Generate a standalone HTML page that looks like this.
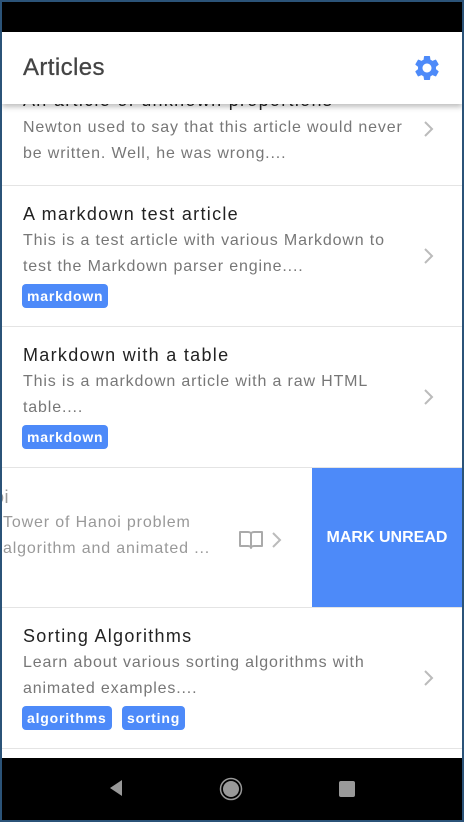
<!DOCTYPE html>
<html><head><meta charset="utf-8"><style>
*{margin:0;padding:0;box-sizing:border-box}
body{width:464px;height:822px;background:#2b5378;position:relative;overflow:hidden;font-family:"Liberation Sans",Roboto,sans-serif}
.screen{position:absolute;left:2px;top:2px;width:460px;height:818px;background:#fff;overflow:hidden}
.status{position:absolute;left:0;top:0;width:460px;height:30px;background:#000}
.appbar{position:absolute;left:0;top:30px;width:460px;height:72px;background:#fff;box-shadow:0 3px 5px rgba(0,0,0,.25);z-index:5}
.appbar h1{position:absolute;left:21px;top:22px;font-size:24px;font-weight:normal;color:#444;letter-spacing:0.4px;-webkit-text-stroke:0.3px #444}
.gear{position:absolute;left:410px;top:21px}
.row{position:absolute;left:0;width:460px;height:141px;border-bottom:1.5px solid #e4e4e4;background:#fff;overflow:hidden}
.t{position:absolute;left:21px;top:18px;font-size:18px;color:#222;white-space:nowrap;letter-spacing:1.3px}
.d{position:absolute;left:21px;font-size:16px;color:#777;white-space:nowrap;letter-spacing:0.85px}
.chev{position:absolute;left:420px;top:59px}
.tag{position:absolute;top:98px;height:24px;padding:0 5px;background:#4d8af9;color:#fff;font-weight:bold;font-size:14px;line-height:24px;border-radius:4px;letter-spacing:0.8px}
.nav{position:absolute;left:0;top:756px;width:460px;height:62px;background:#000}
</style></head><body><div class="screen">
<div class="status"></div>
<div class="appbar"><h1>Articles</h1>
<svg class="gear" width="30" height="30" viewBox="0 0 24 24"><path fill="#4d8af9" d="M19.14 12.94c.04-.3.06-.61.06-.94 0-.32-.02-.64-.07-.94l2.03-1.58a.49.49 0 0 0 .12-.61l-1.92-3.32a.49.49 0 0 0-.59-.22l-2.39.96c-.5-.38-1.03-.7-1.62-.94l-.36-2.54a.48.48 0 0 0-.48-.41h-3.84c-.24 0-.43.17-.47.41l-.36 2.54c-.59.24-1.13.57-1.62.94l-2.39-.96a.48.48 0 0 0-.59.22L2.74 8.87c-.12.21-.08.47.12.61l2.03 1.58c-.05.3-.09.63-.09.94s.02.64.07.94l-2.03 1.58a.49.49 0 0 0-.12.61l1.92 3.32c.12.22.37.29.59.22l2.39-.96c.5.38 1.03.7 1.62.94l.36 2.54c.05.24.24.41.48.41h3.84c.24 0 .44-.17.47-.41l.36-2.54c.59-.24 1.13-.56 1.62-.94l2.39.96c.22.08.47 0 .59-.22l1.92-3.32c.12-.22.07-.47-.12-.61l-2.01-1.58zM12 15.6c-1.98 0-3.6-1.62-3.6-3.6s1.62-3.6 3.6-3.6 3.6 1.62 3.6 3.6-1.62 3.6-3.6 3.6z"/></svg></div>

<div class="row" style="top:70px;height:114px"><div class="t" style="top:18px">An article of unknown proportions</div><div class="d" style="top:47px">Newton used to say that this article would never</div><div class="d" style="top:73px">be written. Well, he was wrong....</div><svg class="chev" style="top:46px" width="14" height="22" viewBox="0 0 14 22"><path d="M3 4l7 7-7 7" fill="none" stroke="#bbb" stroke-width="2"/></svg></div>

<div class="row" style="top:184px"><div class="t">A markdown test article</div><div class="d" style="top:46px">This is a test article with various Markdown to</div><div class="d" style="top:72px">test the Markdown parser engine....</div><svg class="chev" width="14" height="22" viewBox="0 0 14 22"><path d="M3 4l7 7-7 7" fill="none" stroke="#bbb" stroke-width="2"/></svg><div class="tag" style="left:20px">markdown</div></div>

<div class="row" style="top:325px"><div class="t">Markdown with a table</div><div class="d" style="top:46px">This is a markdown article with a raw HTML</div><div class="d" style="top:72px">table....</div><svg class="chev" width="14" height="22" viewBox="0 0 14 22"><path d="M3 4l7 7-7 7" fill="none" stroke="#bbb" stroke-width="2"/></svg><div class="tag" style="left:20px">markdown</div></div>

<div class="row" style="top:466px;height:140px">
<div class="t" style="left:-8px;top:19px;color:#999;letter-spacing:0.5px">oi</div>
<div class="d" style="left:1px;top:46px;color:#999">Tower of Hanoi problem</div>
<div class="d" style="left:1px;top:72px;color:#999">algorithm and animated ...</div>
<svg style="position:absolute;left:236px;top:62px" width="26" height="20" viewBox="0 0 26 20"><path d="M2 2h8c2 0 3 1 3 2v14c0-1-1-2-3-2H2zM24 2h-8c-2 0-3 1-3 2v14c0-1 1-2 3-2h8z" fill="none" stroke="#aaa" stroke-width="2" stroke-linejoin="round"/></svg>
<svg style="position:absolute;left:268px;top:61px" width="14" height="22" viewBox="0 0 14 22"><path d="M3 4l7 7-7 7" fill="none" stroke="#bbb" stroke-width="2"/></svg>
<div style="position:absolute;left:310px;top:0;width:150px;height:139px;background:#4d8af9;color:#fff;font-size:16px;font-weight:bold;line-height:139px;text-align:center">MARK UNREAD</div>
</div>

<div class="row" style="top:606px"><div class="t">Sorting Algorithms</div><div class="d" style="top:46px">Learn about various sorting algorithms with</div><div class="d" style="top:72px">animated examples....</div><svg class="chev" width="14" height="22" viewBox="0 0 14 22"><path d="M3 4l7 7-7 7" fill="none" stroke="#bbb" stroke-width="2"/></svg><div class="tag" style="left:20px">algorithms</div><div class="tag" style="left:120px">sorting</div></div>

<div class="nav">
<svg style="position:absolute;left:106px;top:20px" width="16" height="20" viewBox="0 0 16 20"><path d="M2 10L14 2v16z" fill="#999"/></svg>
<svg style="position:absolute;left:217px;top:19px" width="24" height="24" viewBox="0 0 24 24"><circle cx="12" cy="12" r="10.5" fill="none" stroke="#999" stroke-width="1.5"/><circle cx="12" cy="12" r="8" fill="#999"/></svg>
<div style="position:absolute;left:337px;top:23px;width:16px;height:16px;background:#999;border-radius:2px"></div>
</div>
</div></body></html>
